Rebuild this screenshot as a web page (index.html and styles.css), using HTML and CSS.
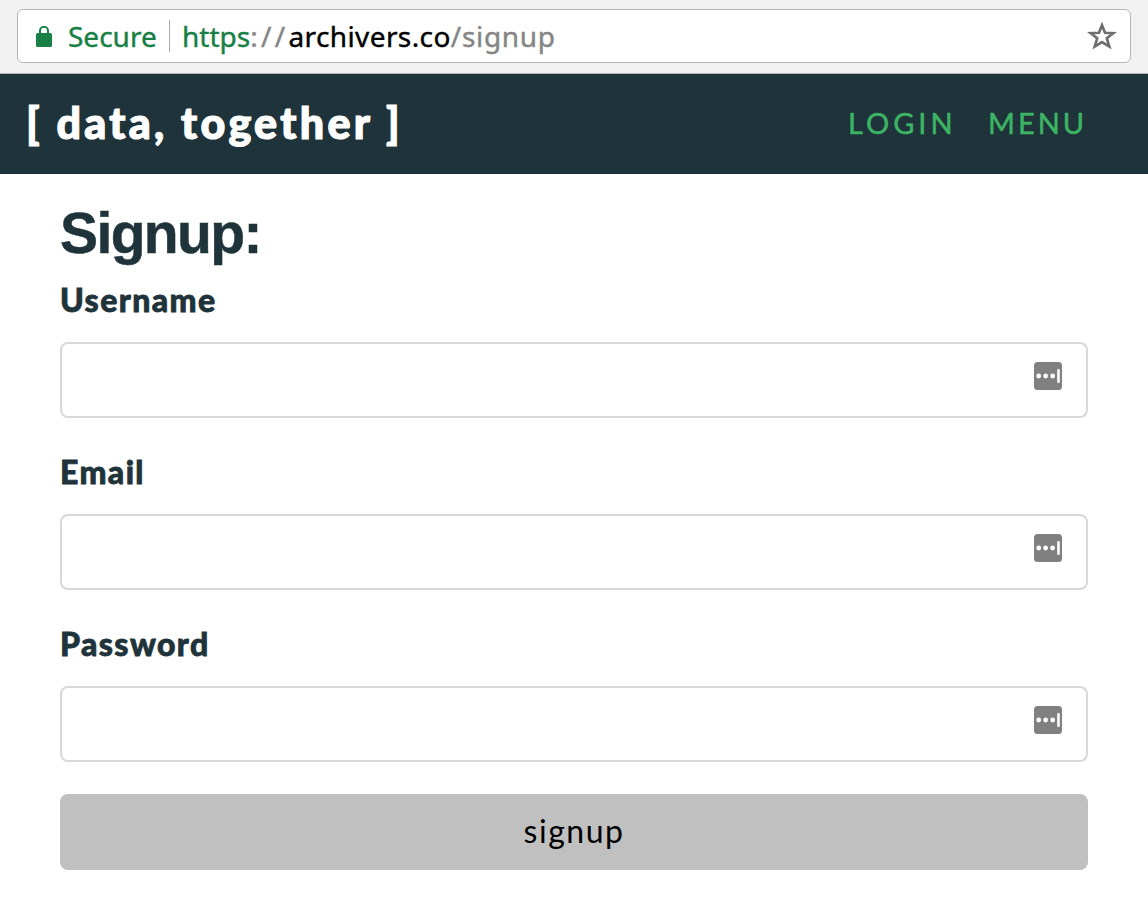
FILE: index.html
```html
<!DOCTYPE html>
<html lang="en">
<head>
<meta charset="utf-8">
<title>Signup</title>
<link rel="stylesheet" href="styles.css">
</head>
<body>
<div class="browser">
  <div class="address">
    <svg class="lock" width="16" height="21" viewBox="0 0 16 21"><path d="M4 8V4.800a4 4 0 0 1 8 0V8" fill="none" stroke="#188045" stroke-width="2"/><rect y="7" width="16" height="14" rx="1.500" fill="#188045"/></svg>
    <span class="secure">Secure</span>
    <span class="divider"></span>
    <span class="url"><span class="scheme">https</span><span class="slashes">://</span><span class="host">archivers.co</span><span class="path">/signup</span></span>
    <svg class="star" width="30" height="28" viewBox="0 0 30 28"><path d="M15 3.200L18 10.800L26.300 11.200L19.800 16.300L22.300 24.600L15 20.100L7.700 24.600L10.200 16.300L3.700 11.200L12 10.800Z" fill="none" stroke="#6e6e6e" stroke-width="2.700"/></svg>
  </div>
</div>
<header class="header">
  <a class="brand">[ data, together ]</a>
  <nav class="nav"><a class="login">LOGIN</a><a class="menu">MENU</a></nav>
</header>
<main class="main">
  <h1 class="title">Signup:</h1>
  <form class="form">
    <label class="label" for="username">Username</label>
    <div class="field">
      <input class="input" id="username" type="text">
      <svg class="manager" width="28" height="28" viewBox="0 0 28 28"><rect width="28" height="28" rx="3.500" fill="#808080"/><g fill="#fff"><circle cx="4.700" cy="14" r="2.400"/><circle cx="11.600" cy="14" r="2.400"/><circle cx="18.600" cy="14" r="2.400"/><rect x="23.200" y="7" width="2.600" height="14" rx="1"/></g></svg>
    </div>
    <label class="label" for="email">Email</label>
    <div class="field">
      <input class="input" id="email" type="text">
      <svg class="manager" width="28" height="28" viewBox="0 0 28 28"><rect width="28" height="28" rx="3.500" fill="#808080"/><g fill="#fff"><circle cx="4.700" cy="14" r="2.400"/><circle cx="11.600" cy="14" r="2.400"/><circle cx="18.600" cy="14" r="2.400"/><rect x="23.200" y="7" width="2.600" height="14" rx="1"/></g></svg>
    </div>
    <label class="label" for="password">Password</label>
    <div class="field">
      <input class="input" id="password" type="password">
      <svg class="manager" width="28" height="28" viewBox="0 0 28 28"><rect width="28" height="28" rx="3.500" fill="#808080"/><g fill="#fff"><circle cx="4.700" cy="14" r="2.400"/><circle cx="11.600" cy="14" r="2.400"/><circle cx="18.600" cy="14" r="2.400"/><rect x="23.200" y="7" width="2.600" height="14" rx="1"/></g></svg>
    </div>
    <button class="submit" type="button">signup</button>
  </form>
</main>
</body>
</html>
```
FILE: styles.css
```css
* { box-sizing: border-box; }
body { margin: 0; background: #fff; color: #1f333a; font-family: Lato, sans-serif; font-variant-ligatures: none; }
.browser { height: 74px; background: #f1f1f1; padding: 9px 17px 0; border-bottom: 1px solid #b4b6b7; }
.address { display: flex; align-items: center; height: 54px; border: 1px solid #b5b5b5; border-radius: 6px; background: #fff; padding: 0 13px 0 18px; font: 28px/52px "Noto Sans", sans-serif; white-space: nowrap; -webkit-text-stroke: 0.4px; }
.lock { margin-right: 16px; }
.secure { width: 89px; color: #188045; }
.divider { width: 1px; height: 32px; background: #aaa; margin: 0 12px; }
.scheme { color: #188045; }
.slashes { color: #858585; letter-spacing: 3.3px; }
.host { color: #000; letter-spacing: 0.4px; }
.path { color: #858585; letter-spacing: 0.7px; }
.star { margin-left: auto; }
.header { height: 100px; padding: 0 62px 4px 26px; background: #1f333a; display: flex; align-items: center; justify-content: space-between; white-space: nowrap; }
.brand { color: #fff; font-size: 43px; font-weight: 900; letter-spacing: 3.300px; -webkit-text-stroke: 1.2px; }
.nav { display: flex; gap: 32px; padding-top: 1px; color: #3cb464; font-size: 29px; letter-spacing: 3px; -webkit-text-stroke: 0.5px; }
.login { width: 108px; letter-spacing: 4px; }
.menu { width: 98px; }
.main { padding: 24px 60px 0; }
.title { margin: 0; font: 700 57px/70px "Liberation Sans", sans-serif; letter-spacing: -1.600px; -webkit-text-stroke: 0.5px; }
.form { display: flex; flex-direction: column; }
.label { height: 40px; line-height: 40px; font-size: 32px; font-weight: 900; letter-spacing: 1.400px; margin: 12px 0 22px; -webkit-text-stroke: 0.8px; }
.field { position: relative; height: 76px; margin-bottom: 22px; }
.input { display: block; width: 100%; height: 76px; padding: 0 70px 0 16px; border: 2px solid #d8d8d8; border-radius: 8px; background: #fff; font: 30px Lato, sans-serif; outline: none; }
.manager { position: absolute; right: 26px; top: 20px; }
.submit { height: 76px; margin-top: 10px; border: 0; border-radius: 8px; padding: 0 0 3px; background: #c0c0c0; color: #000; font: 32px Lato, sans-serif; letter-spacing: 1.500px; }
```
